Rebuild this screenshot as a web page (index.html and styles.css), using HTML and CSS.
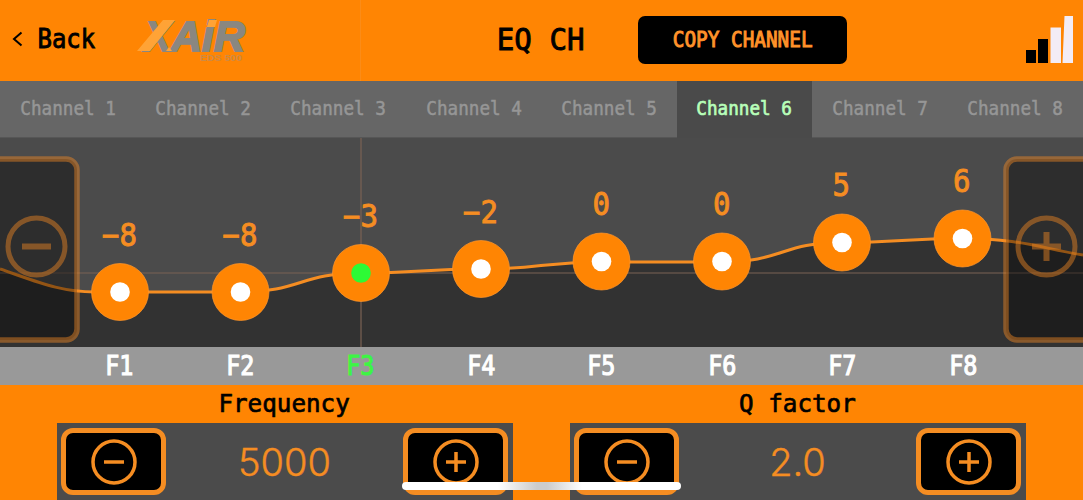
FILE: index.html
```html
<!DOCTYPE html>
<html lang="en">
<head>
<meta charset="utf-8">
<title>EQ CH</title>
<link rel="stylesheet" href="styles.css">
</head>
<body>
<div class="app">
  <header class="header">
    <div class="back">
      <svg class="chevron" viewBox="0 0 11 16"><path d="M9.500 1.500L2 8L9.500 14.500"/></svg>
      <span class="mono back-text">Back</span>
    </div>
    <svg class="logo" viewBox="0 0 116 48">
      <g class="logo-word">
        <text x="10" y="36" textLength="26" lengthAdjust="spacingAndGlyphs">X</text>
        <text x="36" y="36" textLength="74" lengthAdjust="spacingAndGlyphs">AiR</text>
      </g>
      <path class="slash" d="M2 36L28 5H40L15 36ZM31 36L34 32L37 36ZM74 5H82L80 12H72Z"/>
      <text class="logo-sub" x="65" y="46" textLength="42" lengthAdjust="spacingAndGlyphs">EDS 500</text>
    </svg>
    <h1 class="title"><span class="mono">EQ CH</span></h1>
    <button class="copy"><span class="mono">COPY CHANNEL</span></button>
    <svg class="signal" viewBox="0 0 48 48">
      <path d="M0 34H10V47H0ZM12 23H22V47H12Z"/>
      <path class="off" d="M24.500 11.500H35V47H24.500ZM38.500 0H47V47H36.500Z"/>
    </svg>
  </header>
  <nav class="tabs">
    <div class="tab"><span class="mono">Channel 1</span></div>
    <div class="tab"><span class="mono">Channel 2</span></div>
    <div class="tab"><span class="mono">Channel 3</span></div>
    <div class="tab"><span class="mono">Channel 4</span></div>
    <div class="tab"><span class="mono">Channel 5</span></div>
    <div class="tab active"><span class="mono">Channel 6</span></div>
    <div class="tab"><span class="mono">Channel 7</span></div>
    <div class="tab"><span class="mono">Channel 8</span></div>
  </nav>
  <main class="graph">
    <svg class="plot" viewBox="0 0 1083 209">
      <path class="area" d="M0 131C38 144 60 154 95 154H240C301 154 300 135 361 135C421 135 421 131 481 131C541 131 541 124 602 124H722C782 124 782 104.500 842 104.500C902 104.500 902 100.500 963 100.500C1020 100.500 1040 110 1083 117V209H0Z"/>
      <path class="axis" d="M0 135H1083M361 0V209"/>
      <path class="curve" d="M0 131C38 144 60 154 95 154H240C301 154 300 135 361 135C421 135 421 131 481 131C541 131 541 124 602 124H722C782 124 782 104.500 842 104.500C902 104.500 902 100.500 963 100.500C1020 100.500 1040 110 1083 117"/>
      <g class="side">
        <rect x="-84" y="21" width="161" height="181" rx="11"/>
        <circle cx="36.500" cy="108.500" r="28.500"/>
        <path d="M22 108.500H51"/>
      </g>
      <g class="side">
        <rect x="1006" y="21" width="161" height="181" rx="11"/>
        <circle cx="1046.500" cy="108.500" r="28.500"/>
        <path d="M1032 108.500H1061M1046.500 94V123"/>
      </g>
      <g class="knob">
        <circle cx="120" cy="154" r="28.500"/><circle cx="240.500" cy="154" r="28.500"/>
        <circle cx="361" cy="135" r="28.500"/><circle cx="481" cy="131" r="28.500"/>
        <circle cx="601.500" cy="123.500" r="28.500"/><circle cx="722" cy="123.500" r="28.500"/>
        <circle cx="842" cy="104.500" r="28.500"/><circle cx="962.500" cy="100.500" r="28.500"/>
      </g>
      <g class="dot">
        <circle cx="120" cy="154" r="9.800"/><circle cx="240.500" cy="154" r="9.800"/>
        <circle class="selected" cx="361" cy="135" r="9.800"/><circle cx="481" cy="131" r="9.800"/>
        <circle cx="601.500" cy="123.500" r="9.800"/><circle cx="722" cy="123.500" r="9.800"/>
        <circle cx="842" cy="104.500" r="9.800"/><circle cx="962.500" cy="100.500" r="9.800"/>
      </g>
      <g class="value">
        <text x="102" y="107.500" textLength="35" lengthAdjust="spacingAndGlyphs">−8</text>
        <text x="222.500" y="107.500" textLength="35" lengthAdjust="spacingAndGlyphs">−8</text>
        <text x="343" y="88.500" textLength="35" lengthAdjust="spacingAndGlyphs">−3</text>
        <text x="463" y="84.500" textLength="35" lengthAdjust="spacingAndGlyphs">−2</text>
        <text x="592.500" y="77" textLength="17.500" lengthAdjust="spacingAndGlyphs">0</text>
        <text x="713" y="77" textLength="17.500" lengthAdjust="spacingAndGlyphs">0</text>
        <text x="832.500" y="57.500" textLength="17.500" lengthAdjust="spacingAndGlyphs">5</text>
        <text x="953" y="54" textLength="17.500" lengthAdjust="spacingAndGlyphs">6</text>
      </g>
    </svg>
  </main>
  <div class="bands">
    <span class="mono">F1</span><span class="mono">F2</span><span class="mono current">F3</span><span class="mono">F4</span><span class="mono">F5</span><span class="mono">F6</span><span class="mono">F7</span><span class="mono">F8</span>
  </div>
  <footer class="controls">
    <section class="control">
      <h2><span class="mono">Frequency</span></h2>
      <div class="stepper">
        <button class="step"><svg viewBox="0 0 46 46"><circle cx="23" cy="23" r="21"/><path d="M13 23H33"/></svg></button>
        <span class="reading">5000</span>
        <button class="step"><svg viewBox="0 0 46 46"><circle cx="23" cy="23" r="21"/><path d="M13 23H33M23 13V33"/></svg></button>
      </div>
    </section>
    <section class="control">
      <h2><span class="mono">Q factor</span></h2>
      <div class="stepper">
        <button class="step"><svg viewBox="0 0 46 46"><circle cx="23" cy="23" r="21"/><path d="M13 23H33"/></svg></button>
        <span class="reading">2.0</span>
        <button class="step"><svg viewBox="0 0 46 46"><circle cx="23" cy="23" r="21"/><path d="M13 23H33M23 13V33"/></svg></button>
      </div>
    </section>
  </footer>
  <div class="home-bar"></div>
</div>
</body>
</html>
```
FILE: styles.css
```css
* { box-sizing: border-box; }
body { margin: 0; background: #ff8503; }
button { border: 0; margin: 0; padding: 0; }
.app { position: relative; width: 1083px; height: 500px; overflow: hidden; background: #ff8503; display: flex; flex-direction: column; }
.mono { display: inline-block; font-family: "DejaVu Sans Mono", monospace; transform: scaleX(.9); white-space: pre; line-height: 1; }

.header { height: 81px; flex: none; display: flex; align-items: flex-start; background: linear-gradient(90deg, transparent 360px, #fb8c18 360px, #fb8c18 361px, transparent 361px); }
.back { width: 135px; height: 78px; display: flex; align-items: center; padding-left: 12px; flex: none; }
.chevron { width: 11px; height: 16px; fill: none; stroke: #000; stroke-width: 2; }
.back-text { font-size: 26px; margin-left: 12px; transform: scaleX(.92); -webkit-text-stroke: .9px #000; }
.logo { width: 116px; height: 48px; margin-top: 15px; flex: none; overflow: visible; }
.logo-word { font: italic bold 43px "Liberation Sans", sans-serif; fill: #8a8780; stroke: #8a8780; stroke-width: 2; }
.slash { fill: #ffa336; }
.logo-sub { font: bold 9px "Liberation Sans", sans-serif; fill: #cf8a42; }
.title { margin: 0; width: 387px; height: 78px; display: flex; align-items: center; justify-content: flex-end; padding-right: 51px; font-weight: 400; font-size: 31px; flex: none; }
.title .mono { transform: scaleX(.94); -webkit-text-stroke: .9px #000; }
.copy { width: 209px; height: 48px; margin-top: 16px; border-radius: 7px; background: #000; color: #ff922a; font-size: 21.500px; flex: none; }
.copy .mono { margin: 0 -10px; font-weight: 400; -webkit-text-stroke: 1px #ff922a; }
.signal { width: 48px; height: 48px; margin: 16px 9px 0 auto; fill: #000; flex: none; }
.signal .off { fill: #f3ecf5; }

.tabs { height: 57px; flex: none; display: grid; grid-template-columns: repeat(8, 1fr); background: #666; border-bottom: 1px solid #565656; }
.tab { display: flex; align-items: center; justify-content: center; color: #969696; font-size: 19.600px; -webkit-text-stroke: .5px currentColor; }
.tab.active { background: #4a4a4a; color: #b8ffb9; margin-bottom: -1px; padding-bottom: 1px; -webkit-text-stroke-width: .7px; }

.graph { height: 209px; flex: none; background: #4b4b4b; }
.plot { display: block; width: 1083px; height: 209px; }
.area { fill: #323232; }
.axis { stroke: #7b6254; stroke-width: 1.2; fill: none; }
.curve { stroke: #f58d22; stroke-width: 3; fill: none; }
.side { fill: #000; fill-opacity: .4; stroke: #f38a24; stroke-opacity: .45; stroke-width: 5.500; }
.side circle { fill: none; stroke-width: 5; }
.side path { fill: none; stroke-width: 6; }
.knob { fill: #ff8503; stroke: #ff972c; stroke-width: .7; }
.dot { fill: #fff; }
.dot .selected { fill: #2dfa35; }
.value { font: 31.500px "DejaVu Sans Mono", monospace; fill: #f58d22; stroke: #f58d22; stroke-width: .9; }

.bands { height: 38px; flex: none; display: flex; align-items: center; background: #999; color: #fff; font-size: 26px; padding: 0 60px 1px 59px; }
.bands .mono { flex: 1; text-align: center; -webkit-text-stroke: 1.1px currentColor; }
.bands .current { color: #3df545; }

.controls { flex: none; height: 115px; display: grid; grid-template-columns: 456px 456px; gap: 57px; padding-left: 57px; }
.control { display: flex; flex-direction: column; }
.control h2 { margin: 0; height: 38px; display: flex; align-items: center; justify-content: center; padding: 0 2px 1px 0; font-weight: 400; font-size: 25.500px; -webkit-text-stroke: .7px #000; }
.control h2 .mono { transform: scaleX(.95); }
.stepper { height: 77px; display: flex; align-items: flex-start; justify-content: space-between; padding: 5px 5px 0 4px; background: #4b4b4b; }
.step { width: 105px; height: 67px; border: 5px solid #f58d22; border-radius: 12px; background: #000; display: flex; align-items: center; justify-content: center; }
.step svg { width: 46px; height: 46px; fill: none; stroke: #f58d22; stroke-width: 3.500; flex: none; }
.reading { font: 300 38px/68px Inter, sans-serif; color: #f58d22; -webkit-text-stroke: .4px #f58d22; }
.home-bar { position: absolute; left: 402px; top: 482px; width: 279px; height: 7.500px; border-radius: 4px; background: linear-gradient(90deg, #fff 0 96px, #ccc 135px 145px, #fff 180px); }
```
